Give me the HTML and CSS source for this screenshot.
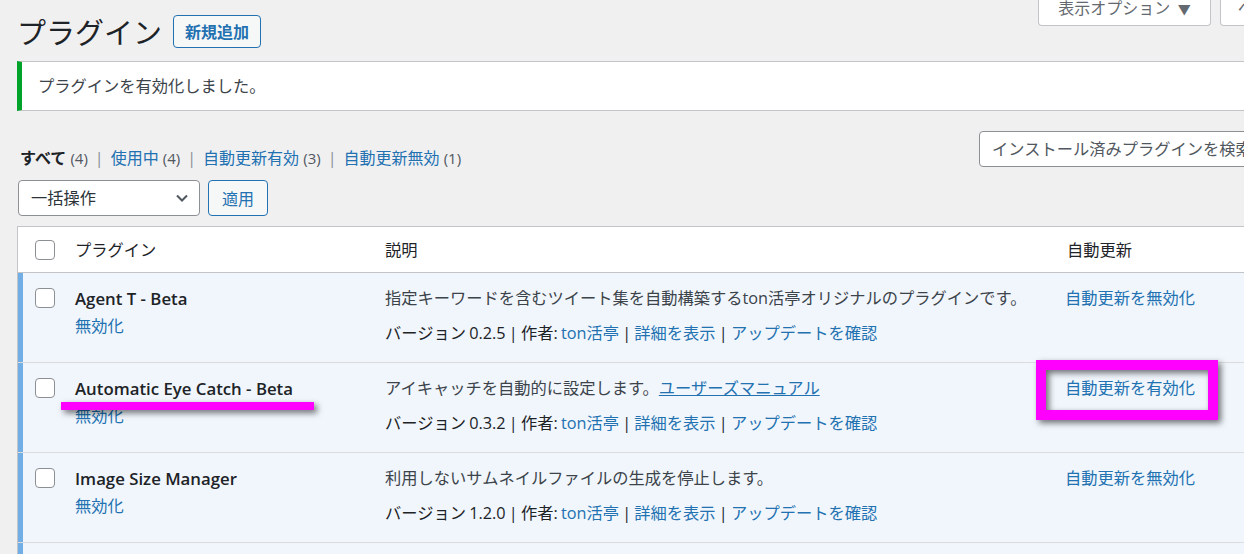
FILE: index.html
```html
<!DOCTYPE html>
<html lang="ja">

<head>
  <meta charset="UTF-8">
  <meta name="viewport" content="width=device-width, initial-scale=1.0">
  <title>プラグイン</title>
  <link rel="stylesheet" href="styles.css">
</head>

<body>
  <div class="page">
    <div class="top">
      <div class="heading">
        <h1>プラグイン</h1>
        <a class="add-new">新規追加</a>
      </div>
      <div class="screen-links">
        <button class="meta-btn options">表示オプション <span class="tri">▼</span></button>
        <button class="meta-btn help">ヘルプ <span class="tri">▼</span></button>
      </div>
    </div>

    <div class="notice">
      <p>プラグインを有効化しました。</p>
    </div>

    <div class="filter-row">
      <ul class="subsubsub">
        <li><b class="current">すべて</b> <span class="count">(4)</span></li>
        <li class="sep">|</li>
        <li><a>使用中</a> <span class="count">(4)</span></li>
        <li class="sep">|</li>
        <li><a>自動更新有効</a> <span class="count">(3)</span></li>
        <li class="sep">|</li>
        <li><a>自動更新無効</a> <span class="count">(1)</span></li>
      </ul>
      <div class="search">インストール済みプラグインを検索...</div>
    </div>

    <div class="bulk">
      <div class="select">
        <span>一括操作</span>
        <svg width="14" height="14" viewBox="0 0 14 14"><path d="M2 4.5 L7 9.5 L12 4.5" fill="none" stroke="#50575e" stroke-width="2"/></svg>
      </div>
      <button class="apply">適用</button>
    </div>

    <div class="table">
      <div class="row head">
        <div class="cell cb"><span class="check"></span></div>
        <div class="cell">プラグイン</div>
        <div class="cell">説明</div>
        <div class="cell auto-head">自動更新</div>
      </div>

      <div class="row active">
        <div class="cell cb"><span class="check"></span></div>
        <div class="cell name">
          <strong>Agent T - Beta</strong>
          <div class="actions"><a>無効化</a></div>
        </div>
        <div class="cell desc">
          <p>指定キーワードを含むツイート集を自動構築するton活亭オリジナルのプラグインです。</p>
          <p class="meta">バージョン 0.2.5 | 作者: <a>ton活亭</a> | <a>詳細を表示</a> | <a>アップデートを確認</a></p>
        </div>
        <div class="cell auto"><a>自動更新を無効化</a></div>
      </div>

      <div class="row active">
        <div class="cell cb"><span class="check"></span></div>
        <div class="cell name">
          <strong>Automatic Eye Catch - Beta</strong>
          <div class="actions"><a>無効化</a></div>
        </div>
        <div class="cell desc">
          <p>アイキャッチを自動的に設定します。<a class="ul">ユーザーズマニュアル</a></p>
          <p class="meta">バージョン 0.3.2 | 作者: <a>ton活亭</a> | <a>詳細を表示</a> | <a>アップデートを確認</a></p>
        </div>
        <div class="cell auto"><a>自動更新を有効化</a></div>
      </div>

      <div class="row active">
        <div class="cell cb"><span class="check"></span></div>
        <div class="cell name">
          <strong>Image Size Manager</strong>
          <div class="actions"><a>無効化</a></div>
        </div>
        <div class="cell desc">
          <p>利用しないサムネイルファイルの生成を停止します。</p>
          <p class="meta">バージョン 1.2.0 | 作者: <a>ton活亭</a> | <a>詳細を表示</a> | <a>アップデートを確認</a></p>
        </div>
        <div class="cell auto"><a>自動更新を無効化</a></div>
      </div>

      <div class="row active">
        <div class="cell cb"><span class="check"></span></div>
        <div class="cell name"></div>
        <div class="cell desc"></div>
        <div class="cell auto"></div>
      </div>
    </div>

    <!-- annotations drawn over the screenshot -->
    <div class="mark-line"></div>
    <div class="mark-box"></div>
  </div>
</body>

</html>
```

FILE: styles.css
```css
html,
body {
  overflow: hidden;
}

body {
  margin: 0;
  background-color: #f0f0f1;
  color: #1d2327;
  font-family: "Open Sans", "Noto Sans CJK JP", sans-serif;
  font-size: 16.25px;
  line-height: 24px;
}

a {
  color: #2271b1;
  text-decoration: none;
}

.page {
  position: relative;
  padding-left: 17px;
}

.top {
  display: flex;
  justify-content: space-between;
  align-items: flex-start;
}

.heading {
  display: flex;
  align-items: center;
  gap: 11px;
  padding-top: 15px;
}

h1 {
  margin: 0;
  font-size: 29px;
  font-weight: 400;
  line-height: 33px;
  font-family: "Noto Sans CJK JP", sans-serif;
  color: #1d2327;
}

.add-new {
  display: flex;
  align-items: center;
  height: 31px;
  padding: 0 11px;
  border: 1px solid #2271b1;
  border-radius: 4px;
  background-color: #f6f7f7;
  font-size: 16px;
  font-weight: bold;
}

.screen-links {
  display: flex;
  gap: 9px;
  margin-top: -12px;
  margin-right: -80px;
}

.meta-btn {
  height: 38px;
  padding: 0;
  background-color: #fff;
  border: 1px solid #c3c4c7;
  border-top: none;
  border-radius: 0 0 4px 4px;
  color: #646970;
  font-family: "Noto Sans CJK JP", sans-serif;
  font-size: 16px;
}

.options {
  width: 173px;
}

.help {
  width: 104px;
}

.tri {
  font-size: 13px;
  margin-left: 4px;
}

.notice {
  margin-top: 13px;
  margin-right: -20px;
  height: 48px;
  display: flex;
  align-items: center;
  background-color: #fff;
  border: 1px solid #c3c4c7;
  border-left: 5px solid #00a32a;
  padding-left: 16px;
}

.notice p {
  margin: 0;
  color: #3c434a;
}

.filter-row {
  display: flex;
  justify-content: space-between;
  align-items: flex-start;
  margin-top: 20px;
  height: 36px;
}

.subsubsub {
  display: flex;
  list-style: none;
  margin: 15px 0 0 3px;
  padding: 0;
  gap: 7px;
  font-size: 16px;
  color: #50575e;
}

.current {
  color: #1d2327;
}

.count {
  color: #50575e;
  font-size: 15px;
}

.sep {
  color: #8c8f94;
}

.search {
  width: 300px;
  height: 34px;
  margin-right: -49px;
  padding-left: 12px;
  display: flex;
  align-items: center;
  background-color: #fff;
  border: 1px solid #8c8f94;
  border-radius: 4px;
  color: #50575e;
  white-space: nowrap;
  overflow: hidden;
}

.bulk {
  display: flex;
  gap: 8px;
  margin-top: 13px;
  margin-left: 1px;
}

.select {
  width: 158px;
  height: 34px;
  padding: 0 10px 0 12px;
  display: flex;
  align-items: center;
  justify-content: space-between;
  background-color: #fff;
  border: 1px solid #8c8f94;
  border-radius: 4px;
  color: #2c3338;
}

.apply {
  width: 60px;
  height: 36px;
  background-color: #f6f7f7;
  border: 1px solid #2271b1;
  border-radius: 4px;
  color: #2271b1;
  font-family: "Noto Sans CJK JP", sans-serif;
  font-size: 16px;
}

.table {
  margin-top: 10px;
  width: 1300px;
  background-color: #fff;
  border: 1px solid #c3c4c7;
}

.row {
  display: grid;
  grid-template-columns: 57px 310px 681px 1fr;
  height: 89px;
  border-bottom: 1px solid #dcdcde;
}

.row.head {
  height: 45px;
  align-items: center;
  border-bottom-color: #c3c4c7;
}

.row.active {
  background-color: #f0f6fc;
  box-shadow: inset 5px 0 0 #72aee6;
}

.cell {
  min-width: 0;
}

.cb {
  padding-left: 17px;
}

.row.active .cb {
  padding-top: 15px;
}

.auto-head {
  padding-left: 1px;
}

.check {
  display: block;
  width: 18px;
  height: 18px;
  background-color: #fff;
  border: 1px solid #8c8f94;
  border-radius: 4px;
}

.head .check {
  margin-top: 1px;
}

.name {
  padding-top: 14px;
}

.name strong {
  display: block;
  font-size: 16.8px;
  font-weight: 600;
  color: #1d2327;
}

.actions {
  margin-top: 3px;
}

.desc {
  padding-top: 13px;
  color: #3c434a;
}

.desc p {
  margin: 0;
}

.desc .meta {
  margin-top: 11px;
  color: #1d2327;
  word-spacing: -1px;
}

.ul {
  text-decoration: underline;
}

.auto {
  padding-top: 13px;
  margin-left: -1px;
}

.mark-line {
  position: absolute;
  left: 61px;
  top: 402px;
  width: 253px;
  height: 8px;
  background-color: #ff00ff;
  filter: drop-shadow(3px 3px 3px rgba(0, 0, 0, 0.55));
}

.mark-box {
  position: absolute;
  left: 1036px;
  top: 360px;
  width: 162px;
  height: 40px;
  border: 10px solid #ff00ff;
  filter: drop-shadow(3px 3px 3px rgba(0, 0, 0, 0.55));
}
```
